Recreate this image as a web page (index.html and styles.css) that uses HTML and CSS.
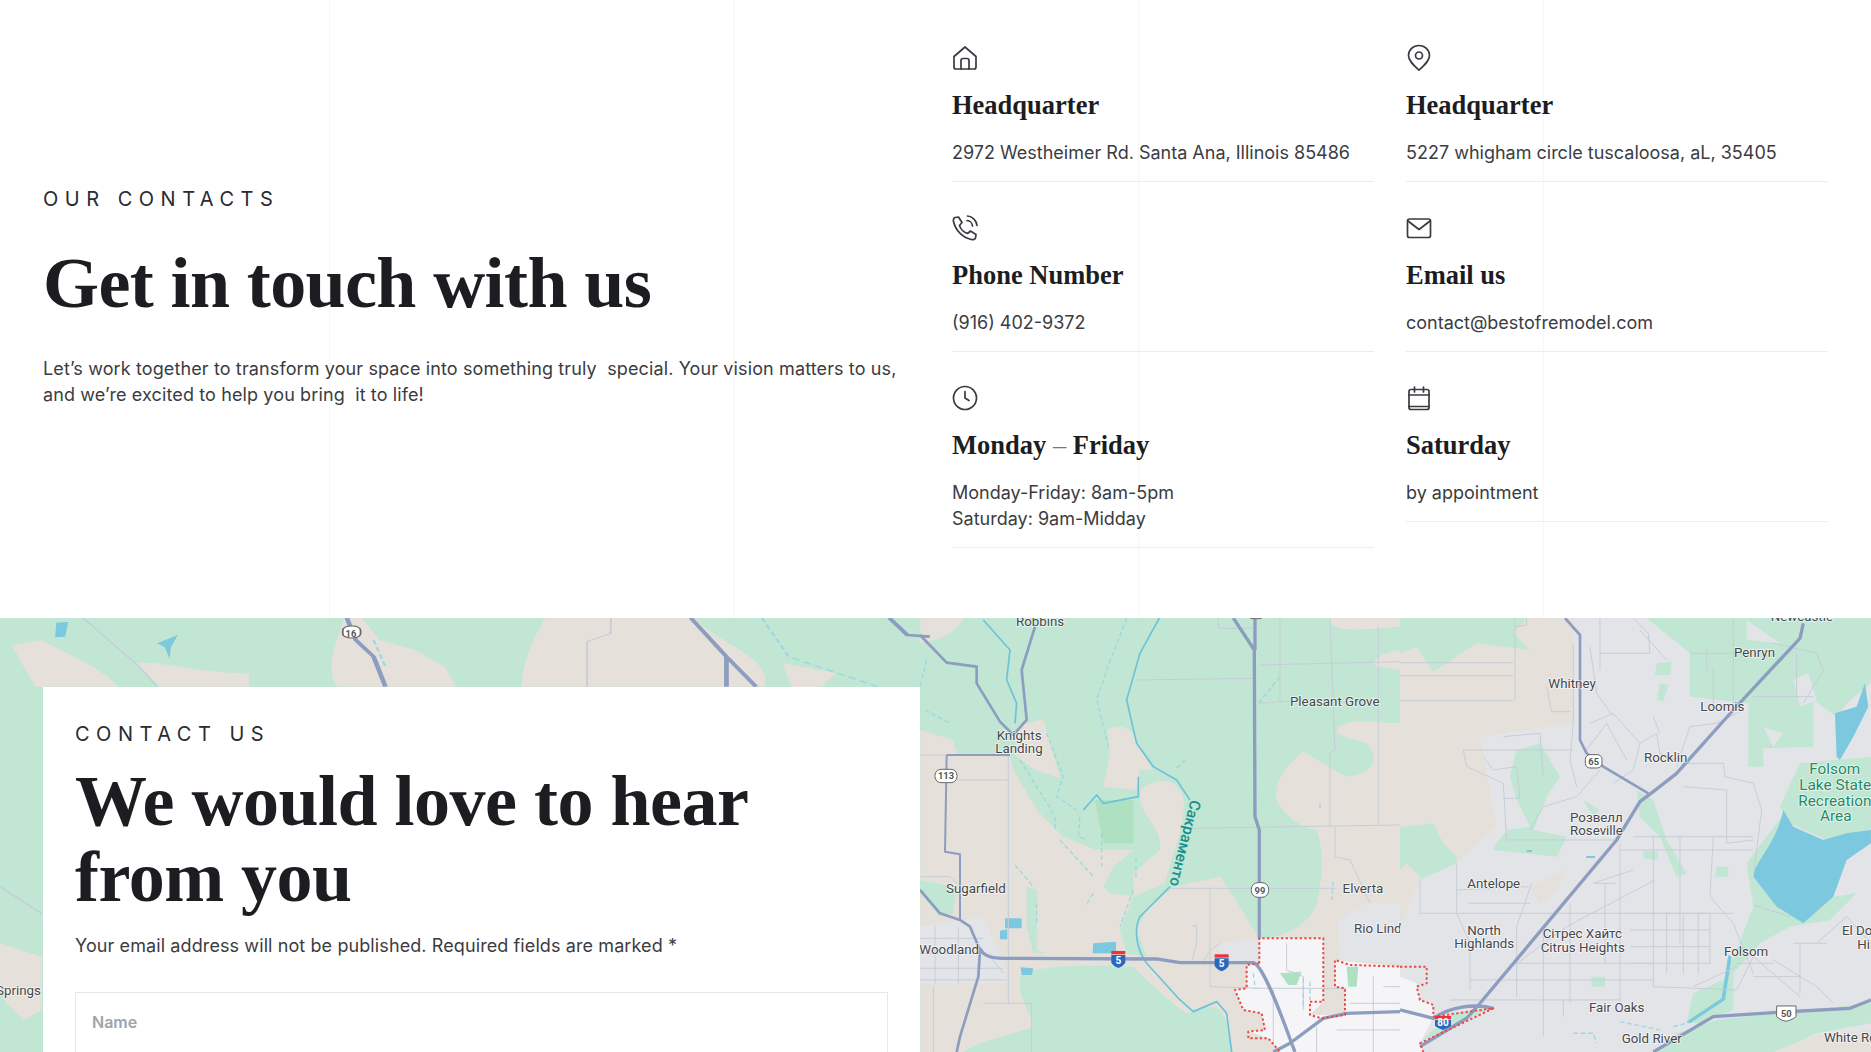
FILE: index.html
```html
<!DOCTYPE html>
<html lang="en">
<head>
  <meta charset="UTF-8" />
  <meta name="viewport" content="width=device-width, initial-scale=1.0" />
  <title>Contact</title>
  <link rel="stylesheet" href="styles.css">
</head>
<body>
  <!-- CONTACTS -->
  <section class="contacts">
    <div class="intro">
      <p class="eyebrow">OUR CONTACTS</p>
      <h1>Get in touch with us</h1>
      <p class="lead">Let’s work together to transform your space into something truly&nbsp; special. Your vision matters to us, and we’re excited to help you bring&nbsp; it to life!</p>
    </div>

    <div class="info-grid">
      <div class="info">
        <svg class="icon" viewBox="0 0 26 26"><path d="M2 11.500 13 2l11 9.500V22a2 2 0 0 1-2 2H4a2 2 0 0 1-2-2Z"/><path d="M9 24v-8.500a2 2 0 0 1 2-2h4a2 2 0 0 1 2 2V24"/></svg>
        <h3>Headquarter</h3>
        <p>2972 Westheimer Rd. Santa Ana, Illinois 85486</p>
      </div>
      <div class="info">
        <svg class="icon" viewBox="0 0 26 26"><path d="M13 25C8 20.500 2.500 16 2.500 10.500a10.500 10 0 0 1 21 0C23.500 16 18 20.500 13 25Z"/><circle cx="13" cy="10.500" r="3.500"/></svg>
        <h3>Headquarter</h3>
        <p>5227 whigham circle tuscaloosa, aL, 35405</p>
      </div>
      <div class="info">
        <svg class="icon" viewBox="0 0 26 26"><path d="M3 2.500 6.500 2 10 7.500 7.500 10.500C8.500 14 12 17.500 15.500 18.500L18.500 16 24 19.500 23.500 23C23 24.500 21 25 19.500 24.500 10.500 22.500 3.500 15.500 1.500 6.500 1.200 5 1.500 3.200 3 2.500Z"/><path d="M15 5.500a6 6 0 0 1 5.500 5.500"/><path d="M15.500 1a10.500 10.500 0 0 1 9.500 9.500"/></svg>
        <h3>Phone Number</h3>
        <p>(916) 402-9372</p>
      </div>
      <div class="info">
        <svg class="icon" viewBox="0 0 26 26"><rect x="1.500" y="4" width="23" height="18.500" rx="2"/><path d="m2 6 11 8.500L24 6"/></svg>
        <h3>Email us</h3>
        <p>contact@bestofremodel.com</p>
      </div>
      <div class="info">
        <svg class="icon" viewBox="0 0 26 26"><circle cx="13" cy="13" r="11.500"/><path d="M13 6.500V13l4 2.500"/></svg>
        <h3>Monday <span class="dash">–</span> Friday</h3>
        <p>Monday-Friday: 8am-5pm<br>Saturday: 9am-Midday</p>
      </div>
      <div class="info">
        <svg class="icon" viewBox="0 0 26 26"><rect x="3" y="4.500" width="20" height="20" rx="2"/><path d="M3 10h20M8.500 2v5M17.500 2v5M3 21.500h20"/></svg>
        <h3>Saturday</h3>
        <p>by appointment</p>
      </div>
    </div>
  </section>

  <!-- MAP + FORM -->
  <section class="map-section">
    <svg class="map" viewBox="0 618 1871 434" preserveAspectRatio="none" aria-label="Map of the Sacramento area">
      <rect x="0" y="618" width="1871" height="434" class="land"/>

      <!-- west part -->
      <g transform="translate(0 610) scale(.593 .3333)">
        <path class="green" d="M0 24H1552V1326H0Z"/>
        <path class="land" d="M580 24H610L640 90 700 120 750 170 770 230H570C550 190 560 130 580 24Z"/>
        <path class="land" d="M880 230C880 160 900 80 920 24H1170C1220 110 1300 140 1290 230Z"/>
        <path class="land" d="M20 105 70 90C100 120 170 170 200 230H60L40 170Z"/>
        <path class="land" d="M230 160C270 150 330 190 420 190V230H270Z"/>
        <path class="land" d="M1320 160 1410 190 1385 232H1335Z"/>
        <path class="land" d="M0 1000 70 1040V1200L40 1230 10 1180 0 1140Z"/>
        <path class="water" d="M95 38 115 36 110 80 93 82Z"/>
        <path class="water" d="M265 100 300 75 288 112 286 146 278 112Z"/>
        <path class="minor" d="M140 24 235 170 265 230M990 230V95L1030 70V24M0 830 70 910"/>
        <path class="major" d="M585 24 600 90 630 140 650 230M1165 24 1225 140 1275 230M1225 140V230M1500 24 1530 75 1568 80"/>
        <path class="stream" d="M630 90 650 170M1285 24 1330 140 1480 230"/>
        <rect x="578" y="48" width="30" height="36" rx="13" class="shield"/>
      </g>
      <g transform="translate(0 610) scale(.3333)">
        <text x="1053" y="81" class="shield-num">16</text>
        <text x="-12" y="1155" class="label">Springs</text>
      </g>

      <!-- middle part -->
      <g transform="translate(920 610) scale(.3333)">
        <path class="green" d="M0 100C60 90 110 70 130 24H1225C1240 70 1300 60 1440 50V120C1380 130 1350 150 1370 170L1440 180V340C1370 340 1300 320 1260 350 1230 370 1270 380 1340 400 1380 440 1370 490 1280 500 1240 480 1180 440 1150 425 1090 470 1060 530 1070 570 1090 610 1130 650 1190 660 1210 720 1210 780 1195 860 1190 930 1100 985 1020 985 1000 960 970 900 900 800L760 830 680 900 650 960 680 1040 620 1030 600 960 640 860 570 850 550 830 580 770 640 720H530L430 680 350 600 280 480 270 440 110 430 100 390 0 360Z"/>
        <path class="land" d="M560 360C600 340 640 350 650 400 680 450 700 480 700 480H660L650 540 550 530C560 470 580 420 560 360Z"/>
        <path class="land" d="M660 540C700 510 760 490 790 560 800 640 760 720 735 820L640 860V790L720 720C730 650 660 620 660 560Z"/>
        <path class="land" d="M300 345 370 328 420 505 345 480 280 430Z"/>
        <path class="green" d="M300 1100C340 1070 450 1060 640 1070 700 1130 780 1200 800 1210 860 1190 900 1170 920 1240L940 1326H130C180 1290 260 1280 340 1250 330 1200 290 1160 300 1100Z"/>
        <path class="green" d="M0 810 110 830 100 910 60 920 0 850ZM320 830 350 840 350 1020 380 1030 340 1030 320 950Z"/>
        <path class="green-dark" d="M525 570 640 570V700H550Z"/>
        <path class="grey" d="M1255 930 1340 880H1440V1060L1260 1050ZM0 950 190 920 260 1080V1120H0Z"/>
        <path class="grey" d="M900 1000 1020 985V1060L880 1060Z"/>
        <path class="white" d="M1020 985H1210V1175L1170 1215 1275 1215V1135L1245 1130V1050L1440 1070V1326H1080L1045 1285 985 1265 1035 1260 1025 1210 970 1200 945 1140 980 1135V1065L1020 1060Z"/>
        <path class="green-dark" d="M1080 1090 1145 1085 1130 1125 1105 1125ZM1280 1070 1315 1070 1310 1130 1285 1130Z"/>
        <path class="water" d="M255 925H305V955H255ZM240 962 262 958V988H240ZM520 1000 588 995V1030H518ZM302 1072 340 1075 335 1095 305 1095Z"/>
        <path class="minor" d="M650 210 1000 205M1020 165 1440 155M1080 24V275L1020 280M1230 24 1245 420 1230 430V650M1375 50V645M810 655 1440 645M1245 650V740L1290 750 1350 880M750 835H1250M870 835V1130L1020 1135M0 435H80M265 440V1180M110 510H265M0 800H90L120 830M1000 1135H1280M190 1180H335V1326M40 1130V1326M895 24V55H1000M1080 275H1380"/>
        <path class="minor" d="M0 985H190M0 1030H190M0 1075H250M0 1110H260M45 950V1120M115 950V1120M210 1040 250 1090M1100 1000V1080L1150 1100V1200M1190 1250V1326M1360 1100V1326M1390 1130H1440M1290 1180H1440M1250 1260H1440M1060 1140V1300M900 1000C880 1010 860 1030 850 1060"/>
        <path class="minor" d="M815 950 830 945 830 1000 815 1060"/>
        <path class="river" d="M718 24 660 130 620 270 650 400 700 470 770 510 810 570M750 830 660 920C640 960 650 1020 680 1060L780 1170 820 1205 890 1175 920 1210 935 1326M190 30 270 120 260 210 290 280 285 340M655 500 655 560 550 580 530 555 490 600"/>
        <path class="stream" d="M620 24 560 180 530 270 565 410M20 150 0 230M15 300 90 340M300 450 400 610M380 370 430 500 410 560 470 600M420 690 520 800M405 620V660M480 620 475 680 500 690M545 670V770M648 745V800M520 850 495 890M640 840 600 950M285 765 340 830M350 880V940M1080 200 1015 280M1240 815 1235 870M1200 580V600M770 475 800 445"/>
        <path class="stream" d="M1150 1105V1190M1170 1115V1170M1000 1090 1005 1130"/>
        <path class="major thin" d="M80 435H270M80 435 75 725 120 733V930"/>
        <path class="major" d="M345 50 305 180 320 330 280 375 240 335 170 220V170L80 158 0 75"/>
        <path class="major" d="M0 840 60 910 120 930 150 950 180 1020 175 1100 120 1280 110 1326"/>
        <path class="major wide" d="M180 1015C190 1040 220 1045 250 1045L710 1047 780 1058H1000C1020 1065 1050 1120 1115 1300L1125 1326"/>
        <path class="major wide" d="M940 24 1003 120 1005 620 1018 660V985M1005 24V120"/>
        <path class="major wide" d="M1060 1326 1110 1300 1210 1225 1280 1210 1440 1205"/>
        <path class="boundary" d="M1018 1060V985H1210V1175H1170V1215L1205 1225 1275 1215V1135L1245 1130V1050L1290 1065 1440 1070M1018 1060 980 1065V1135L945 1140 970 1200 1025 1210 1035 1260 985 1265V1285H1045L1080 1326"/>
        <path class="interstate" d="M574 1035H616V1058C612 1066 600 1072 595 1074 590 1072 578 1066 574 1058Z"/>
        <rect x="574" y="1023" width="42" height="10" fill="#e33"/>
        <text x="595" y="1062" class="i-num">5</text>
        <path class="interstate" d="M884 1045H926V1068C922 1076 910 1082 905 1084 900 1082 888 1076 884 1068Z"/>
        <rect x="884" y="1033" width="42" height="10" fill="#e33"/>
        <text x="905" y="1072" class="i-num">5</text>
        <rect x="45" y="478" width="66" height="40" rx="18" class="shield"/>
        <text x="78" y="508" class="shield-num">113</text>
        <rect x="994" y="818" width="52" height="44" rx="20" class="shield"/>
        <text x="1020" y="851" class="shield-num">99</text>
        <rect x="988" y="10" width="40" height="16" rx="8" class="shield"/>
        <text x="288" y="48" class="label">Robbins</text>
        <text x="1110" y="288" class="label">Pleasant Grove</text>
        <text x="230" y="389" class="label">Knights</text>
        <text x="226" y="430" class="label">Landing</text>
        <text x="78" y="848" class="label">Sugarfield</text>
        <text x="1268" y="848" class="label">Elverta</text>
        <text x="1302" y="970" class="label">Rio Linda</text>
        <text x="-2" y="1033" class="label">Woodland</text>
        <text x="0" y="0" class="label river-name" transform="translate(812 568) rotate(104)">Сакраменто</text>
      </g>

      <!-- east part -->
      <g transform="translate(1400 610) scale(.3333)">
        <path class="green" d="M0 24H380L340 70 390 120 230 100 100 185 50 110 0 130Z"/>
        <path class="green" d="M0 650 100 640 130 700 170 740V840L90 880 60 800 20 760 0 780Z"/>
        <path class="grey" d="M520 24H1413V1326H0V950L60 810 170 760 290 650 240 380 520 340Z"/>
        <path class="land" d="M390 830 500 780 470 840 420 880Z"/>
        <path class="green" d="M740 24H1413V220L1350 270 1310 320 1240 270 1240 410 1090 415 1090 470 1045 470V280L870 260V130Z"/>
        <path class="grey" d="M1180 210 1225 190 1250 270 1200 290ZM1090 350 1150 370 1120 410ZM1040 30 1140 100 1040 90Z"/>
        <path class="green" d="M1200 460 1413 440V670L1280 690 1170 640 1140 590Z"/>
        <path class="green" d="M1040 760 1160 600 1130 700 1060 800 1130 890 1210 940 1300 860 1370 850 1290 930 1170 950 1080 1000 1000 1090 1000 1200 900 1240 860 1240 880 1150 970 1110 1010 1020 1060 890Z"/>
        <path class="green" d="M350 420 420 400 480 500 440 560 400 660 500 680 470 740 280 720 290 700 320 660 390 650 350 570 330 500ZM550 570 600 600 580 620ZM710 540 760 570 800 690 860 790 830 800 780 680 720 620ZM730 720 775 725 770 750 730 745ZM950 770H985V800H945ZM770 160 815 155 810 195 765 195ZM780 220 805 225 790 275 770 270ZM575 1100 615 1100V1130H575ZM830 1270 950 1230 1413 1180V1240L1250 1270 1130 1326H770Z"/>
        <path class="land" d="M1120 1326 1250 1275 1413 1260V1326Z"/>
        <path class="white" d="M0 1100 50 1120 60 1170 100 1185V1222L60 1300 70 1326H0Z"/>
        <path class="green" d="M65 1290 160 1210 270 1195 130 1265Z"/>
        <path class="water" d="M1150 600 1180 650 1270 690 1340 670 1413 660V700L1340 750 1300 860 1210 940 1130 890 1060 800C1060 760 1130 700 1150 600Z"/>
        <path class="water" d="M1305 310 1370 290 1395 220 1405 290 1360 380 1320 450 1310 440Z"/>
        <path class="water" d="M985 1035 995 1040 975 1170 870 1240 860 1235 965 1165ZM560 738H585V744H558ZM380 720H396V726H380Z"/>
        <path class="stream" d="M520 1270 580 1270 590 1300M660 1235 780 1260M820 1250 860 1240"/>
        <path class="minor" d="M0 158H340M0 197H340M0 272H340M345 24V270M380 24V45L345 50M520 100V340L510 450 530 530M600 24V180M600 130 750 130 745 70 700 24M440 230 455 305H510"/>
        <path class="minor" d="M190 420H520M190 420 200 470 310 520 320 690H660M310 380 420 370 430 500M250 440 280 480 350 470 360 565H310M570 340 640 310 720 400 700 480 640 520M560 420 620 340 680 450M720 400 770 370 780 430 850 460M600 480 530 560 430 590 390 660M850 460H970L975 500 1060 520 1085 600 1060 800M850 530 980 540M980 540V700L1060 690"/>
        <path class="minor" d="M170 760V910L210 1000 210 1140M60 810V910H1000M205 880H390M395 820 350 950V1160M170 840 385 830M700 680H1060M660 720 1060 720M760 680V1130M840 680V1000M660 700V1180M615 820V1060M510 880V1180M430 950V1280M580 820 650 820M690 910H930M800 910V1090M850 910V1090M895 910V1090M930 910V1060M690 960H930M690 1010H930M690 1060H930M340 1060H760M210 1110H760M150 1170 660 1170M490 1170V1220M940 680 930 860 1000 940 1060 1090M765 810 500 950 350 1060M580 820 700 780"/>
        <path class="minor" d="M1010 1140 1060 1040 1130 1100 1200 1160M1010 1060 1120 1060M1120 1050 1250 1130 1300 1180M1200 1000V1150M1250 1000 1340 920 1413 1000M1060 885 1170 920M760 1130 1010 1140M1060 1100H1200M1180 1000 1280 1000M880 1130 1010 1070"/>
        <path class="minor" d="M870 130H1030M920 120V180M1000 30V300M940 170V300M1060 260H1240M1250 130 1270 180 1210 280M1190 130V260M1120 100 1250 130M1030 300 950 340 870 350 830 470M720 60 800 150M760 320 780 370M570 110 590 250 640 320"/>
        <path class="major" d="M495 24 540 75V390L560 430 610 470 745 550"/>
        <path class="major wide" d="M240 1180 650 690 720 575 760 545 830 490 1000 300 1200 85 1210 40"/>
        <path class="major wide" d="M760 1326 940 1220 1130 1207 1350 1195 1413 1170"/>
        <path class="major wide" d="M0 1200 60 1215 100 1225C150 1190 220 1180 280 1195M60 1310 200 1225 240 1180"/>
        <path class="boundary" d="M0 1070H80V1120L50 1130 60 1170 100 1185V1220L280 1195 60 1300 70 1326"/>
        <path class="interstate" d="M105 1230H153V1248C148 1252 135 1258 129 1260 123 1258 110 1252 105 1248Z"/>
        <rect x="105" y="1218" width="48" height="10" fill="#e33"/>
        <text x="129" y="1249" class="i-num">80</text>
        <rect x="556" y="434" width="50" height="40" rx="14" class="shield"/>
        <text x="581" y="464" class="shield-num">65</text>
        <path class="shield" d="M1130 1188H1188V1220C1180 1228 1165 1232 1159 1234 1150 1232 1138 1228 1130 1220Z"/>
        <text x="1159" y="1222" class="shield-num">50</text>
        <text x="1112" y="32" class="label">Newcastle</text>
        <text x="1002" y="140" class="label">Penryn</text>
        <text x="445" y="234" class="label">Whitney</text>
        <text x="901" y="302" class="label">Loomis</text>
        <text x="732" y="456" class="label">Rocklin</text>
        <text x="510" y="635" class="label">Розвелл</text>
        <text x="510" y="675" class="label">Roseville</text>
        <text x="202" y="835" class="label">Antelope</text>
        <text x="202" y="976" class="label">North</text>
        <text x="163" y="1013" class="label">Highlands</text>
        <text x="428" y="985" class="label">Сітрес Хайтс</text>
        <text x="422" y="1026" class="label">Citrus Heights</text>
        <text x="972" y="1037" class="label">Folsom</text>
        <text x="567" y="1205" class="label">Fair Oaks</text>
        <text x="665" y="1300" class="label">Gold River</text>
        <text x="1272" y="1296" class="label">White Rock</text>
        <text x="1326" y="976" class="label">El Dorado</text>
        <text x="1372" y="1017" class="label">Hills</text>
        <text x="1228" y="493" class="label park">Folsom</text>
        <text x="1198" y="540" class="label park">Lake State</text>
        <text x="1195" y="587" class="label park">Recreation</text>
        <text x="1260" y="634" class="label park">Area</text>
      </g>
    </svg>

    <div class="card">
      <p class="eyebrow">CONTACT US</p>
      <h2>We would love to hear from you</h2>
      <p class="note">Your email address will not be published. Required fields are marked *</p>
      <input class="field" type="text" placeholder="Name">
    </div>
  </section>
</body>
</html>
```

FILE: styles.css
```css
body{margin:0;padding:0;background:#fff;color:#1c1d21;font-family:"Inter",sans-serif;overflow:hidden}
p{margin:0}
h1,h2,h3{font-family:"Liberation Serif",serif;font-weight:700;margin:0;color:#1c1d21}

/* contacts */
.contacts{display:flex;align-items:center;gap:32px;box-sizing:border-box;height:618px;padding:44px 43px 70px;background-image:linear-gradient(90deg,#f6f6f8 1px,transparent 1px);background-size:404.6px 100%;background-position:329px 0}
.intro{flex:0 0 877px}
.eyebrow{font-size:20px;line-height:28px;letter-spacing:6.5px;font-weight:400;color:#2a2b30}
h1{font-size:72px;line-height:80px;margin:30px 0 33px;letter-spacing:-.6px}
.lead{font-size:18px;line-height:26px;letter-spacing:.12px;color:#3b3c42;width:870px}
.info-grid{flex:1;display:grid;grid-template-columns:1fr 1fr;gap:32px;align-items:start}
.info{border-bottom:1.5px solid #ecedf1;padding-bottom:15px}
.icon{display:block;width:26px;height:28px;fill:none;stroke:#3a3b40;stroke-width:1.7;stroke-linecap:round;stroke-linejoin:round}
.info h3{font-size:26.500px;line-height:34px;margin-top:16px}
.info h3 .dash{font-weight:400;color:#77787d}
.info p{font-size:18px;line-height:26px;color:#3b3c42;margin-top:18px}

/* map + form */
.map-section{position:relative;height:434px;overflow:hidden}
.map{position:absolute;left:0;top:0;width:100%;height:100%}
.land{fill:#e5e1da}
.green{fill:#c1e6d3}
.green-dark{fill:#aee0c2}
.grey{fill:#e3e4e8}
.white{fill:#f5f5f7}
.water{fill:#7cc8de}
.major,.minor,.river,.stream,.boundary{fill:none;stroke-linejoin:round}
.major{stroke:#8c9dbf;stroke-width:8}
.major.thin{stroke-width:6}
.major.wide{stroke-width:10}
.minor{stroke:#c6cdd8;stroke-width:3}
.river{stroke:#6cc3d9;stroke-width:5}
.stream{stroke:#9bd8e0;stroke-width:4;stroke-dasharray:14 8}
.boundary{stroke:#ea4a45;stroke-width:6;stroke-dasharray:7 7}
.shield{fill:#fff;stroke:#666;stroke-width:3}
.shield-num{font-family:"Roboto",sans-serif;font-size:28px;font-weight:700;fill:#555;text-anchor:middle}
.interstate{fill:#2a68c0}
.i-num{font-family:"Roboto",sans-serif;font-size:30px;font-weight:700;fill:#fff;text-anchor:middle}
.label{font-family:"Roboto",sans-serif;font-size:40px;fill:#45474b;stroke:#fff;stroke-width:5;stroke-opacity:.7;paint-order:stroke}
.river-name{fill:#17908f;stroke:#c1e6d3;font-weight:500;font-size:46px}
.park{fill:#1f8a64;font-size:46px}

.card{position:relative;box-sizing:border-box;width:877px;height:500px;margin:69px 0 0 43px;padding:33px 32px;background:#fff}
h2{font-size:72px;line-height:76px;margin:15px 0 18px;letter-spacing:-.5px}
.note{font-size:18px;line-height:26px;letter-spacing:.1px;color:#3b3c42}
.field{display:block;box-sizing:border-box;width:100%;height:90px;margin-top:33px;padding:0 16px 30px;border:1.5px solid #e6e7eb;font:600 16px "Inter",sans-serif;color:#1c1d21;outline:none}
.field::placeholder{color:#a1a3ad}
```
